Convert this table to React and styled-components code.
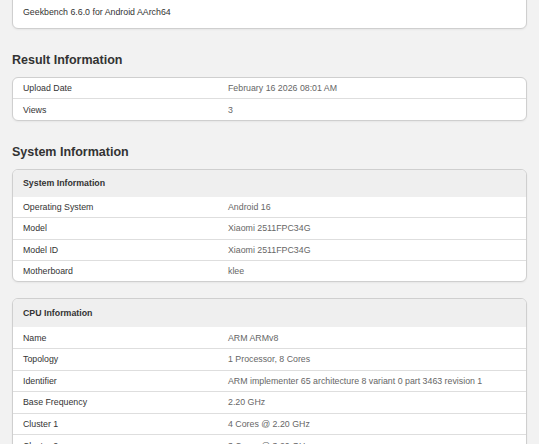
import React from "react";
import styled, { createGlobalStyle } from "styled-components";

const GlobalStyle = createGlobalStyle`
  html, body {
    margin: 0;
    padding: 0;
    background: #f2f2f2;
    font-family: "Liberation Sans", Arial, sans-serif;
    color: #333;
  }
`;

const Page = styled.div`
  padding: 0 12px;
`;

const Card = styled.div`
  background: #fff;
  border: 1px solid #cfcfcf;
  border-radius: 6px;
  overflow: hidden;
  box-shadow: 0 1px 2px rgba(0, 0, 0, 0.05);
  margin-top: ${(p) => p.$top || 0}px;
`;

const TopCard = styled(Card)`
  margin-top: -10px;
  padding: 15px 10px 10px;
  font-size: 8.8px;
  line-height: 12px;
  color: #333;
`;

const Heading = styled.h2`
  margin: 23px 0 9px;
  font-size: 12.5px;
  line-height: 16px;
  font-weight: 700;
  color: #333;
`;

const CardHeader = styled.div`
  height: ${(p) => p.$h || 27}px;
  display: flex;
  align-items: center;
  padding: 0 10px;
  background: #efefef;
  font-size: 8.8px;
  font-weight: 700;
  color: #333;
`;

const Row = styled.div`
  display: grid;
  grid-template-columns: 204px 1fr;
  height: ${(p) => p.$h || 20.4}px;
  align-items: center;
  font-size: 8.8px;
  & + & {
    border-top: 1px solid #dedede;
  }
`;

const Label = styled.div`
  padding-left: 10px;
  color: #333;
`;

const Value = styled.div`
  padding-left: 11px;
  color: #666;
  white-space: nowrap;
`;

const result = [
  ["Upload Date", "February 16 2026 08:01 AM"],
  ["Views", "3"],
];

const system = [
  ["Operating System", "Android 16"],
  ["Model", "Xiaomi 2511FPC34G"],
  ["Model ID", "Xiaomi 2511FPC34G"],
  ["Motherboard", "klee"],
];

const cpu = [
  ["Name", "ARM ARMv8"],
  ["Topology", "1 Processor, 8 Cores"],
  ["Identifier", "ARM implementer 65 architecture 8 variant 0 part 3463 revision 1"],
  ["Base Frequency", "2.20 GHz"],
  ["Cluster 1", "4 Cores @ 2.20 GHz"],
  ["Cluster 2", "3 Cores @ 3.20 GHz"],
  ["Cluster 3", "1 Core @ 3.20 GHz"],
];

const Rows = ({ items, h }) =>
  items.map(([k, v]) => (
    <Row key={k} $h={h}>
      <Label>{k}</Label>
      <Value>{v}</Value>
    </Row>
  ));

export default function App() {
  return (
    <Page>
      <GlobalStyle />
      <TopCard>Geekbench 6.6.0 for Android AArch64</TopCard>

      <Heading>Result Information</Heading>
      <Card>
        <Rows items={result} />
      </Card>

      <Heading>System Information</Heading>
      <Card>
        <CardHeader>System Information</CardHeader>
        <Rows items={system} />
      </Card>

      <Card $top={16}>
        <CardHeader $h={28}>CPU Information</CardHeader>
        <Rows items={cpu} h={20.6} />
      </Card>
    </Page>
  );
}
